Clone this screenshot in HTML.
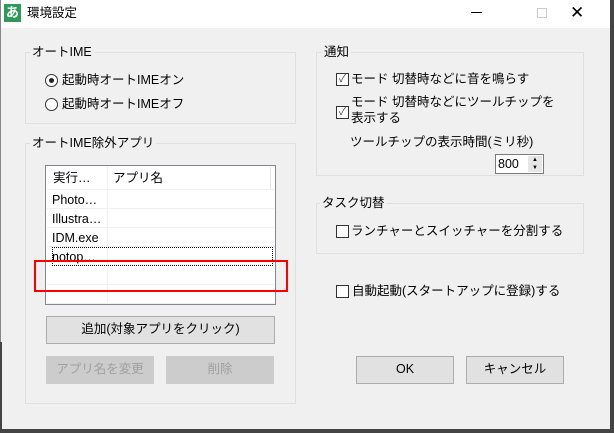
<!DOCTYPE html><html><head><meta charset="utf-8"><style>
*{margin:0;padding:0;box-sizing:border-box}
body{width:614px;height:433px;overflow:hidden;background:#f0f0f0;font-family:"Liberation Sans","Noto Sans CJK JP",sans-serif;font-size:12.5px;color:#000;position:relative}
.a{position:absolute;white-space:nowrap}
.g{position:absolute;border:1px solid #e0e0e0}
.gl{position:absolute;background:#f0f0f0;padding:0 2px;line-height:16px}
.btn{position:absolute;background:#e1e1e1;border:1px solid #adadad;text-align:center;line-height:25px}
.dis{color:#a0a0a0;background:#cccccc;border-color:#cccccc}
.cb{position:absolute;width:13px;height:13px;border:1px solid #333;background:#fff}
.rd{position:absolute;width:13px;height:13px;border:1px solid #333;border-radius:50%;background:#fff}
.row{position:absolute;left:1px;right:1px;height:19px;border-bottom:1px solid #f0f0f0}
</style></head><body>
<div class="a" style="left:0;top:0;width:614px;height:28px;background:#fff"></div>
<div class="a" style="left:4px;top:4px;width:17px;height:18px;background:#2e9a5a;color:#fff;font-size:13px;line-height:18px;text-align:center;font-weight:bold">あ</div>
<div class="a" style="left:27px;top:5px;line-height:16px">環境設定</div>
<div class="a" style="left:471px;top:12px;width:11px;height:1px;background:#000"></div>
<div class="a" style="left:537px;top:8px;width:10px;height:10px;border:1px solid #ccc"></div>
<div class="a" style="left:570px;top:2px;font-size:17px;line-height:22px;font-weight:300">✕</div>
<div class="a" style="left:610px;top:0;width:4px;height:433px;background:#444"></div>
<div class="a" style="left:0;top:429px;width:614px;height:4px;background:#444"></div>
<div class="a" style="left:0;top:0;width:1px;height:433px;background:#888"></div>
<div class="a" style="left:0;top:342px;width:2px;height:91px;background:#444"></div>

<div class="g" style="left:25px;top:52px;width:271px;height:72px"></div>
<div class="gl" style="left:30px;top:44px">オートIME</div>
<div class="rd" style="left:45px;top:74px"><div style="position:absolute;left:3px;top:3px;width:5px;height:5px;border-radius:50%;background:#222"></div></div>
<div class="a" style="left:62px;top:71px;line-height:18px">起動時オートIMEオン</div>
<div class="rd" style="left:45px;top:98px"></div>
<div class="a" style="left:62px;top:95px;line-height:18px">起動時オートIMEオフ</div>

<div class="g" style="left:25px;top:143px;width:271px;height:261px"></div>
<div class="gl" style="left:30px;top:135px">オートIME除外アプリ</div>
<div class="a" style="left:45px;top:165px;width:231px;height:140px;border:1px solid #828790;background:#fff">
<div class="a" style="left:61px;top:0;width:1px;height:138px;background:#f0f0f0"></div>
<div class="row" style="top:0;height:24px"></div>
<div class="a" style="left:7px;top:3px;line-height:18px">実行…</div>
<div class="a" style="left:67px;top:3px;line-height:18px">アプリ名</div>
<div class="a" style="left:224px;top:1px;width:1px;height:22px;background:#e5e5e5"></div>
<div class="row" style="top:24px"></div><div class="a" style="left:6px;top:25px;line-height:18px">Photo…</div>
<div class="row" style="top:43px"></div><div class="a" style="left:6px;top:44px;line-height:18px">Illustra…</div>
<div class="row" style="top:62px"></div><div class="a" style="left:6px;top:63px;line-height:18px">IDM.exe</div>
<div class="row" style="top:81px;border:1px dotted #000;left:6px;right:2px"></div><div class="a" style="left:6px;top:82px;line-height:18px">notop…</div>
<div class="row" style="top:100px"></div>
<div class="row" style="top:119px"></div>
</div>
<div class="a" style="left:34px;top:260px;width:254px;height:32px;border:2px solid #f00"></div>
<div class="btn" style="left:46px;top:316px;width:229px;height:28px">追加(対象アプリをクリック)</div>
<div class="btn dis" style="left:46px;top:356px;width:108px;height:28px">アプリ名を変更</div>
<div class="btn dis" style="left:166px;top:356px;width:108px;height:28px">削除</div>

<div class="g" style="left:316px;top:52px;width:268px;height:124px"></div>
<div class="gl" style="left:322px;top:44px">通知</div>
<div class="cb" style="left:336px;top:73px;font-size:11px;line-height:11px;text-align:center;color:#555">✓</div>
<div class="a" style="left:351px;top:70px;line-height:18px">モード 切替時などに音を鳴らす</div>
<div class="cb" style="left:336px;top:106px;font-size:11px;line-height:11px;text-align:center;color:#555">✓</div>
<div class="a" style="left:351px;top:94px;line-height:16px">モード 切替時などにツールチップを<br>表示する</div>
<div class="a" style="left:350px;top:133px;line-height:18px">ツールチップの表示時間(ミリ秒)</div>
<div class="a" style="left:495px;top:154px;width:49px;height:20px;border:1px solid #7a7a7a;background:#fff;line-height:18px;padding-left:2px">800</div>
<div class="a" style="left:528px;top:156px;width:14px;height:16px;background:#e6e6e6;font-size:6px;line-height:8px;text-align:center">▲<br>▼</div>

<div class="g" style="left:316px;top:203px;width:268px;height:51px"></div>
<div class="gl" style="left:320px;top:195px">タスク切替</div>
<div class="cb" style="left:336px;top:225px"></div>
<div class="a" style="left:351px;top:222px;line-height:18px">ランチャーとスイッチャーを分割する</div>
<div class="cb" style="left:336px;top:285px"></div>
<div class="a" style="left:352px;top:282px;line-height:18px">自動起動(スタートアップに登録)する</div>

<div class="btn" style="left:356px;top:356px;width:98px;height:28px">OK</div>
<div class="btn" style="left:466px;top:356px;width:98px;height:28px">キャンセル</div>
</body></html>
